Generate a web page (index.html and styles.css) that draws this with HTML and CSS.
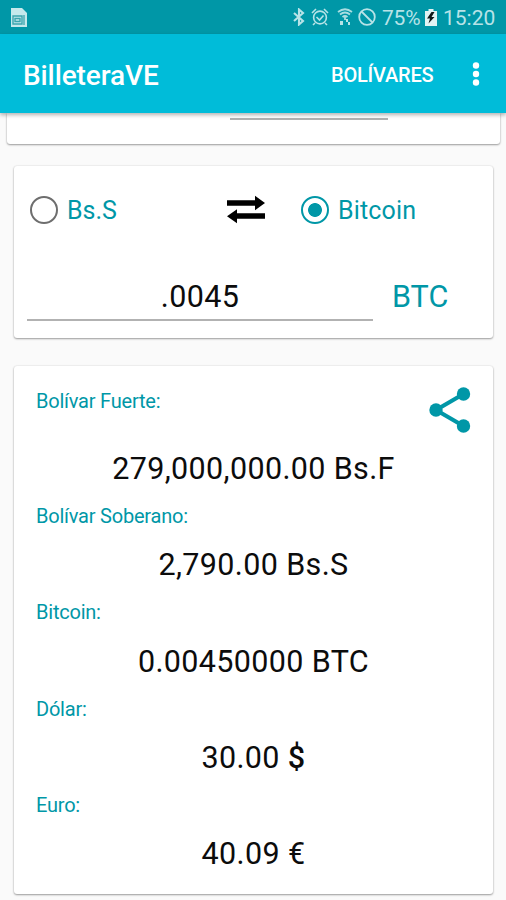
FILE: index.html
```html
<!DOCTYPE html>
<html lang="es">
<head>
<meta charset="utf-8">
<title>BilleteraVE</title>
<link rel="stylesheet" href="styles.css">
</head>
<body>
<div class="status">
  <svg class="sim" width="17" height="20" viewBox="0 0 17 20"><path fill="#c5e9ec" d="M0 0h11l5 5v14H0z"/><path fill="none" stroke="#3aa5ae" stroke-width="1.4" d="M2 8h9v8H2zM4 10.5h5v3H4z"/><path fill="none" stroke="#3aa5ae" stroke-width="1.3" d="M13 7v10"/></svg>
  <div class="tray">
    <svg width="12" height="18" viewBox="0 0 12 18"><path fill="none" stroke="#b7e3e7" stroke-width="2.100" d="M1 5l9 8-4 3.500V1.500L10 5 1 13"/></svg>
    <svg width="18" height="18" viewBox="0 0 18 18"><g fill="none" stroke="#b7e3e7" stroke-width="1.6"><circle cx="9" cy="9.500" r="6.400"/><path d="M5.500 9l3 3 4-4.500M1 5l4-4M17 5l-4-4M4 15l-2 2M14 15l2 2"/></g></svg>
    <svg width="16" height="18" viewBox="0 0 16 18"><g fill="none" stroke="#a9dde1" stroke-width="1.800"><path d="M1 4Q8-1.500 15 4M3 6.500Q8 2.500 13 6.500M5.500 9Q8 7 10.500 9M8 8v4"/></g><path fill="#b7e3e7" d="M3 13h3v4H3zM9 11h2v3H9zM11 14h2v3h-2z"/></svg>
    <svg width="18" height="18" viewBox="0 0 18 18"><g fill="none" stroke="#b7e3e7" stroke-width="1.800"><circle cx="9" cy="9" r="7.800"/><path d="M3.500 3.500l11 11"/></g></svg>
    <span class="percent">75%</span>
    <svg class="battery" width="12" height="17" viewBox="0 0 12 17"><path fill="#e2f3f3" d="M3.500 0h5v2H12v15H0V2h3.500z"/><path fill="#101818" d="M6.500 3L2 9.500h3L3.500 14.500 9.500 8H6.500L9.500 3z"/></svg>
    <span class="clock">15:20</span>
  </div>
</div>
<header class="bar">
  <h1 class="title">BilleteraVE</h1>
  <span class="action">BOLÍVARES</span>
  <svg class="more" width="8" height="24" viewBox="0 0 8 24"><g fill="#fff"><circle cx="4" cy="3.500" r="3.200"/><circle cx="4" cy="12" r="3.200"/><circle cx="4" cy="20.500" r="3.200"/></g></svg>
</header>
<main>
  <section class="card peek"><div class="peek-line"></div></section>
  <section class="card convert">
    <div class="options">
      <span class="radio"></span><span class="option first">Bs.S</span>
      <svg class="swap" width="40" height="30" viewBox="0 0 40 30"><path d="M1 5.200h28V.8l10 7.200-10 7.200v-4.500H1zM39 18.200H11v-4L1 21.200l10 7v-4.500h28z"/></svg>
      <span class="radio on"></span><span class="option second">Bitcoin</span>
    </div>
    <div class="amount">
      <div class="field"><span>.0045</span></div>
      <span class="unit">BTC</span>
    </div>
  </section>
  <section class="card results">
    <svg class="share" width="42" height="46" viewBox="0 0 42 46"><g fill="#0097a7"><path d="M7 23L34.500 7M7 23l27.500 16" stroke="#0097a7" stroke-width="4.200"/><circle cx="7" cy="23" r="6.700"/><circle cx="34.500" cy="7" r="6.700"/><circle cx="34.500" cy="39" r="6.700"/></g></svg>
    <dl>
      <dt>Bolívar Fuerte:</dt><dd class="lead"><span>279,000,000.00 Bs.F</span></dd>
      <dt>Bolívar Soberano:</dt><dd><span>2,790.00 Bs.S</span></dd>
      <dt>Bitcoin:</dt><dd><span>0.00450000 BTC</span></dd>
      <dt>Dólar:</dt><dd><span>30.00 <span class="sign">$</span></span></dd>
      <dt>Euro:</dt><dd><span>40.09 €</span></dd>
    </dl>
  </section>
</main>
</body>
</html>
```
FILE: styles.css
```css
* { box-sizing: border-box; }
body {
  margin: 0;
  height: 900px;
  overflow: hidden;
  background: #fafafa;
  color: #0c0c0c;
  font-family: Roboto, "Liberation Sans", sans-serif;
  white-space: nowrap;
}
svg { display: block; flex: none; }

.status {
  display: flex;
  justify-content: space-between;
  height: 34px;
  padding: 8px 10px 0 11px;
  background: #0097a7;
}
.tray { display: flex; color: #b7e3e7; font-size: 21px; line-height: 20px; }
.tray svg:nth-of-type(1) { margin-right: 6px; }
.tray svg:nth-of-type(2) { margin-right: 8px; }
.tray svg:nth-of-type(3) { margin-right: 5px; }
.tray svg:nth-of-type(4) { margin-right: 6px; }
.tray .battery { margin-top: 1px; }
.percent { width: 43px; letter-spacing: -0.2px; }
.clock { width: 53px; margin-left: 6px; }

.bar {
  position: relative;
  display: flex;
  align-items: center;
  height: 79px;
  padding: 1px 26px 0 23px;
  background: #00bcd9;
  box-shadow: 0 2px 4px rgba(0, 0, 0, .3);
  color: #fff;
}
.title { flex: 1; margin: 3px 0 0; font-size: 28px; font-weight: 500; line-height: 34px; letter-spacing: -0.1px; }
.action { width: 104px; margin: 1px 37px 0 0; font-size: 20px; font-weight: 500; letter-spacing: -0.2px; }

.card {
  background: #fff;
  border-radius: 3px;
  box-shadow: 0 1px 2px rgba(0, 0, 0, .36), 0 0 2px rgba(0, 0, 0, .12);
}
.peek { height: 31px; margin: 0 6px 0 7px; padding: 5px 0 0 223px; border-radius: 0 0 3px 3px; }
.peek-line { width: 158px; height: 2px; background: #b2b2b2; }

.convert { height: 172px; margin: 22px 13px 0 14px; padding: 29px 14px 0 16px; }
.options { display: flex; align-items: center; height: 30px; color: #0097a7; font-size: 25px; }
.radio { flex: none; width: 28px; height: 28px; border: 2.500px solid #6e6e6e; border-radius: 50%; }
.radio.on { border-color: #0097a7; background: radial-gradient(circle, #0097a7 6.500px, #fff 7.300px); }
.option { line-height: 30px; padding-top: 2px; }
.first { width: 159px; margin-left: 9px; }
.swap { width: 40px; margin-right: 35px; fill: #000; }
.second { margin-left: 9px; letter-spacing: 0.15px; }
.amount { display: flex; margin: 54px 0 0 -3px; font-size: 30.500px; line-height: 36px; }
.field { width: 346px; height: 42px; border-bottom: 2px solid #b2b2b2; text-align: center; letter-spacing: 0.4px; }
.unit { margin-left: 19px; color: #0097a7; }

.results { position: relative; height: 528px; margin: 28px 13px 0 14px; padding: 23px 13px 0 22px; }
.share { position: absolute; top: 21px; right: 22px; }
dl { margin: 0; }
dt { color: #0097a7; font-size: 20px; line-height: 24px; letter-spacing: -0.22px; }
dd {
  margin: 19.300px 0 17px -22px;
  padding-left: 13px;
  font-size: 30.500px;
  line-height: 36px;
  letter-spacing: 0.36px;
  text-align: center;
}
dd.lead { margin-top: 38px; }
.sign { font-weight: 500; }
```
